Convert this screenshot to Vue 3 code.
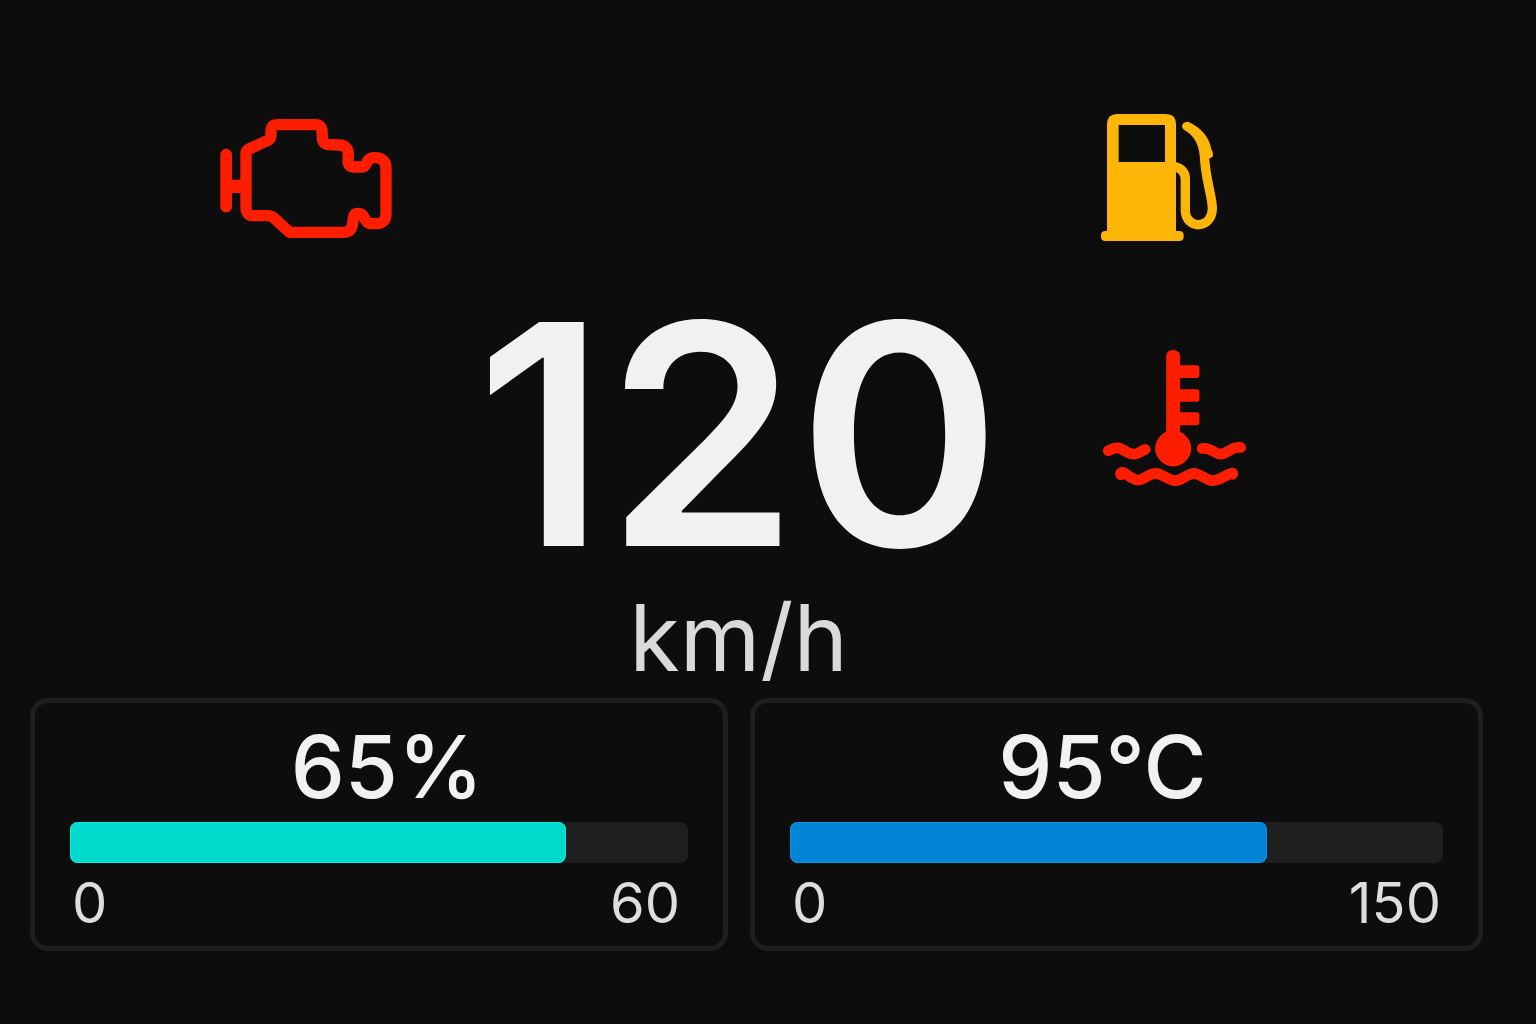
<script setup>
const gauges = [
  { id: 'level', label: 'Fuel level', value: '65%', fill: 80.3, min: '0', max: '60' },
  { id: 'temp', label: 'Coolant temperature', value: '95°C', fill: 73, min: '0', max: '150' },
]
</script>

<template>
  <main class="dashboard">
    <section class="cluster">
      <svg class="engine" viewBox="30 27 514 357" role="img" aria-label="Check engine">
        <g fill="none" stroke="currentColor" stroke-width="34" stroke-linejoin="round">
          <path d="M47.500 134V290" stroke-width="35" stroke-linecap="round" />
          <path d="M50 229H105" stroke-width="40" />
          <path d="M107 292V132Q107 122 116 117L171 92Q182 87 182 76V64Q182 44 202 44H315Q334 44 335 62L336 84Q337 103 356 104L386 105Q415 106 414 134L413 152Q413 171 432 171H454Q464 171 468 160Q475 143 492 143Q527 143 527 176V311Q527 341 498 341H484Q472 341 466 330L458 317Q453 310 442 310Q430 310 429 325L427 340Q424 367 399 367H238L191 324Q183 317 172 317H130Q107 317 107 292Z" />
        </g>
      </svg>

      <svg class="fuel" viewBox="33 27 348 381" role="img" aria-label="Low fuel">
        <path fill="currentColor" fill-rule="evenodd" d="M51 378V58Q51 27 82 27H228Q258 27 258 58V378H268Q281 378 281 391V395Q281 408 268 408H46Q33 408 33 395V391Q33 378 46 378ZM86 60V171H225V60Z" />
        <path fill="none" stroke="currentColor" stroke-width="28" d="M252 184Q286 193 286 222V315C286 375 368 375 367 308C366 270 344 215 343 145" />
        <path fill="currentColor" d="M296 51Q288 48 280 55Q271 66 283 75Q323 97 329 150L357 160Q369 159 369 150Q370 142 364 133Q359 105 343 86Q323 63 296 51Z" />
      </svg>

      <div class="speed">
        <span class="speed-value">120</span>
        <span class="speed-unit">km/h</span>
      </div>

      <svg class="coolant" viewBox="38 29 430 409" role="img" aria-label="Coolant temperature warning">
        <g fill="currentColor">
          <path d="M228 290V50Q228 29 248 29Q270 29 270 50V75H320Q328 75 328 83V105Q328 113 320 113H270V147H320Q328 147 328 155V177Q328 185 320 185H270V216H320Q328 216 328 224V247Q328 255 320 255H270V290Z" />
          <circle cx="249" cy="325" r="54" />
        </g>
        <g fill="none" stroke="currentColor" stroke-width="32" stroke-linecap="round" stroke-linejoin="round">
          <path d="M54 332C90 314 92 328 116 339C137 347 141 339 165 328" />
          <path d="M336 325C358 322 368 334 382 340C398 347 410 336 424 328C434 321 444 322 452 322" />
          <path d="M91 404V399Q96 395 103 399C121 411 131 420 143 420C161 420 176 400 196 400C216 400 234 422 255 422C276 422 292 400 311 400C330 400 350 422 367 422C388 422 404 405 428 399V403" />
        </g>
      </svg>
    </section>

    <section class="gauges">
      <article v-for="g in gauges" :key="g.id" class="gauge" :class="g.id">
        <h2 class="gauge-value">{{ g.value }}</h2>
        <div class="track" role="img" :aria-label="g.label">
          <div class="fill" :style="{ width: g.fill + '%' }"></div>
        </div>
        <div class="scale">
          <span>{{ g.min }}</span>
          <span>{{ g.max }}</span>
        </div>
      </article>
    </section>
  </main>
</template>

<style>
body {
  background: #0d0d0d;
}
</style>

<style scoped>
.dashboard {
  box-sizing: border-box;
  min-height: 100vh;
  padding: 114px 53px 73px 30px;
  background: #0d0d0d;
  color: #f1f1f1;
  font-family: Inter, "Liberation Sans", sans-serif;
}

.cluster {
  display: grid;
  grid-template-columns: 362fr 693fr 398fr;
  grid-template-rows: 128px auto;
  row-gap: 38px;
}

.engine {
  grid-area: 1 / 1;
  align-self: center;
  justify-self: end;
  width: 172px;
  height: 119px;
  color: #ff1d00;
}

.fuel {
  grid-area: 1 / 3;
  width: 116px;
  height: 127px;
  margin-left: 16px;
  color: #fdb507;
}

.speed {
  grid-area: 2 / 2;
  display: flex;
  flex-direction: column;
  align-items: center;
}

.speed-value {
  font-size: 308px;
  line-height: 308px;
  font-weight: 600;
}

.speed-unit {
  margin-top: 4px;
  font-size: 92px;
  line-height: 92px;
  color: #dadada;
}

.coolant {
  grid-area: 2 / 3;
  width: 143px;
  height: 136px;
  margin: 70px 0 0 18px;
  color: #ff1d00;
}

.gauges {
  display: grid;
  grid-template-columns: minmax(0, 698fr) minmax(0, 733fr);
  gap: 22px;
  margin-top: 14px;
}

.gauge {
  padding: 21px 35px 15px;
  border: 5px solid #1f1f1f;
  border-radius: 18px;
}

.gauge-value {
  margin: 0;
  font-size: 86px;
  line-height: 86px;
  font-weight: 500;
  text-align: center;
}

.level .gauge-value {
  padding-left: 16px;
}

.temp .gauge-value {
  padding-right: 28px;
}

.track {
  height: 41px;
  margin-top: 12px;
  border-radius: 8px;
  background: #1f1f1f;
}

.fill {
  height: 100%;
  border-radius: 8px;
}

.level .fill {
  background: #00dacd;
  box-shadow: inset 0 0 0 1px #00eee0;
}

.temp .fill {
  background: #0284d6;
  box-shadow: inset 0 0 0 1px #0795ee;
}

.scale {
  display: flex;
  justify-content: space-between;
  margin-top: 12px;
  padding: 0 2px;
  font-size: 56px;
  line-height: 56px;
  color: #dedede;
}

.level .scale {
  padding-right: 8px;
}
</style>
